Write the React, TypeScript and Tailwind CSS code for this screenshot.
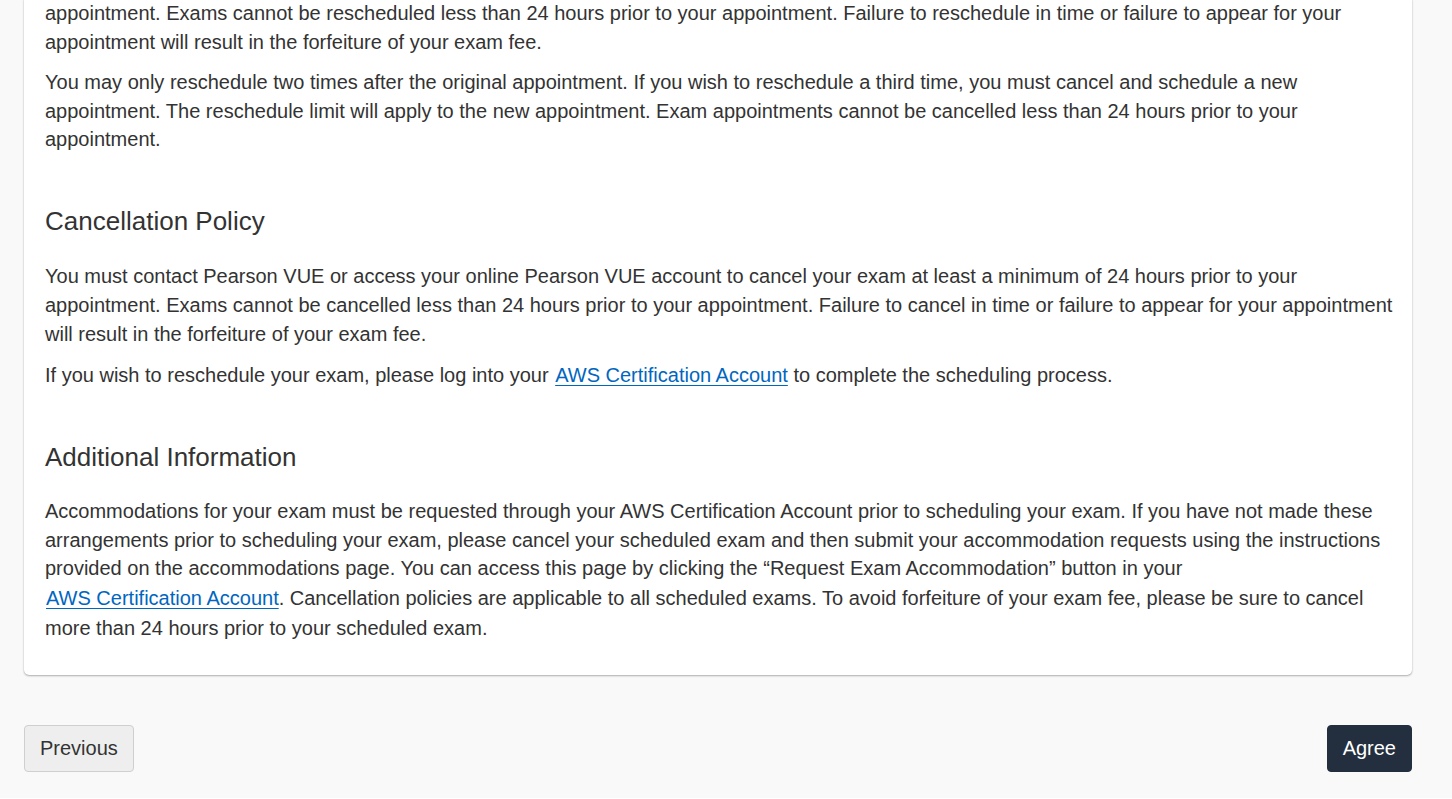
export default function App() {
  const link =
    "inline-block pl-px py-px text-[#0066c0] underline underline-offset-[3px] decoration-1";
  return (
    <div className="min-h-screen bg-[#f9f9f9] font-['Liberation_Sans',Arial,sans-serif] text-[20px] leading-[1.428571] text-[#333]">
      <div className="ml-6 mr-10 rounded-b-[5px] bg-white pl-[21px] pr-[17px] pb-[21px] shadow-[0_1px_2px_0_rgba(0,0,0,0.3),0_0_1px_0_rgba(0,0,0,0.12)]">
        <p className="-mt-[1px] mb-[12px]">
          appointment. Exams cannot be rescheduled less than 24 hours prior to your appointment. Failure to reschedule in time or failure to appear for your
          appointment will result in the forfeiture of your exam fee.
        </p>
        <p className="mb-[12px]">
          You may only reschedule two times after the original appointment. If you wish to reschedule a third time, you must cancel and schedule a new
          appointment. The reschedule limit will apply to the new appointment. Exam appointments cannot be cancelled less than 24 hours prior to your
          appointment.
        </p>

        <h3 className="mt-[53px] mb-[27px] text-[26px] leading-[1.1] font-normal">Cancellation Policy</h3>
        <p className="mb-[12px]">
          You must contact Pearson VUE or access your online Pearson VUE account to cancel your exam at least a minimum of 24 hours prior to your
          appointment. Exams cannot be cancelled less than 24 hours prior to your appointment. Failure to cancel in time or failure to appear for your appointment
          will result in the forfeiture of your exam fee.
        </p>
        <p className="mt-[2px] mb-[12px]">
          If you wish to reschedule your exam, please log into your{" "}
          <a href="#" className={link}>
            AWS Certification Account
          </a>{" "}
          to complete the scheduling process.
        </p>

        <h3 className="mt-[52px] mb-[26px] text-[26px] leading-[1.1] font-normal">Additional Information</h3>
        <p className="mb-[12px]">
          Accommodations for your exam must be requested through your AWS Certification Account prior to scheduling your exam. If you have not made these
          arrangements prior to scheduling your exam, please cancel your scheduled exam and then submit your accommodation requests using the instructions
          provided on the accommodations page. You can access this page by clicking the “Request Exam Accommodation” button in your{" "}
          <a href="#" className={link}>
            AWS Certification Account
          </a>
          . Cancellation policies are applicable to all scheduled exams. To avoid forfeiture of your exam fee, please be sure to cancel
          more than 24 hours prior to your scheduled exam.
        </p>
      </div>

      <div className="ml-6 mr-10 mt-[50px] flex items-center justify-between">
        <button
          type="button"
          className="rounded-[4px] border border-[#cfcfcf] bg-[#eeeeee] px-[15px] py-2 text-[20px] leading-[1.428571] text-[#333]"
        >
          Previous
        </button>
        <button
          type="button"
          className="rounded-[4px] border border-[#232f3e] bg-[#232f3e] px-[15px] py-2 text-[20px] leading-[1.428571] text-white"
        >
          Agree
        </button>
      </div>
    </div>
  );
}
